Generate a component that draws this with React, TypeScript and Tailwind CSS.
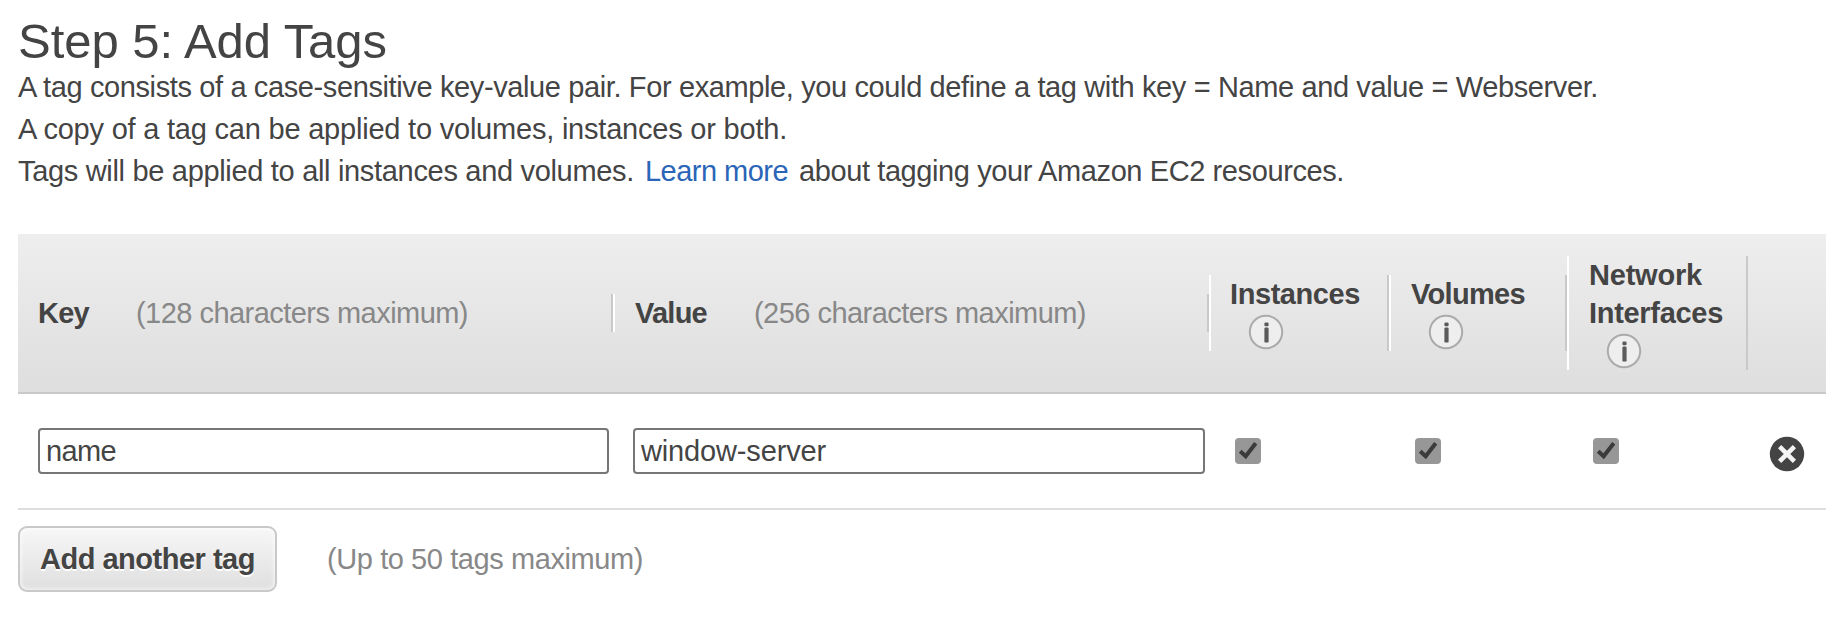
import React from "react";

const INFO_COLOR = "#aaaaaa";

function Fit({ w, children, className = "" }: { w: number; children: string; className?: string }) {
  const ref = React.useRef<HTMLSpanElement>(null);
  const [sp, setSp] = React.useState(0);
  React.useLayoutEffect(() => {
    const el = ref.current;
    if (el) setSp((w - el.getBoundingClientRect().width) / children.length);
  }, []);
  return (
    <span ref={ref} className={`inline-block whitespace-pre ${className}`} style={{ letterSpacing: `${sp}px` }}>
      {children}
    </span>
  );
}

function Info() {
  return (
    <svg width="36" height="36" viewBox="0 0 36 36" className="block">
      <circle cx="18" cy="18" r="16.2" fill="#eeeeee" stroke={INFO_COLOR} strokeWidth="2" />
      <rect x="16.4" y="8.6" width="4.2" height="3.6" rx="1.2" fill="#5a5a5a" />
      <rect x="16.4" y="13.6" width="4.2" height="15" rx="1.2" fill="#5a5a5a" />
    </svg>
  );
}

function Check() {
  return (
    <svg width="26" height="26" viewBox="0 0 26 26" className="block">
      <rect width="26" height="26" rx="4" fill="#979797" />
      <path d="M5.2 13.2L10.7 18.3L20.7 5.2" fill="none" stroke="#3b3b3b" strokeWidth="4" />
    </svg>
  );
}

export default function App() {
  return (
    <main className="h-[636px] w-[1840px] overflow-hidden bg-white pl-[18px] font-['Liberation_Sans',Arial,sans-serif] text-[29px] text-[#444444]">
      <h1 className="h-[66px] pt-[13px] text-[49px] leading-[56px]">
        <Fit w={369}>Step 5: Add Tags</Fit>
      </h1>
      <div className="leading-[42px]">
        <p className="h-[42px]"><Fit w={1580}>A tag consists of a case-sensitive key-value pair. For example, you could define a tag with key = Name and value = Webserver.</Fit></p>
        <p className="h-[42px]"><Fit w={769}>A copy of a tag can be applied to volumes, instances or both.</Fit></p>
        <p className="flex h-[42px]">
          <Fit w={616}>Tags will be applied to all instances and volumes.</Fit>
          <a className="ml-[11px] text-[#2a65b8]"><Fit w={143}>Learn more</Fit></a>
          <span className="ml-[11px]"><Fit w={545}>about tagging your Amazon EC2 resources.</Fit></span>
        </p>
      </div>

      <section className="mt-[42px] w-[1808px]">
        <div className="flex h-[160px] items-center border-b-2 border-[#c9c9c9] bg-linear-to-b from-[#eeeeee] to-[#dedede] leading-[38px]">
          <div className="flex h-[38px] w-[595px] border-r-2 border-[#c9c9c9] pl-5">
            <b><Fit w={51}>Key</Fit></b>
            <span className="ml-[47px] text-[#888888]"><Fit w={332}>(128 characters maximum)</Fit></span>
          </div>
          <div className="flex h-[38px] w-[596px] border-r-2 border-l-2 border-r-[#c9c9c9] border-l-white pl-5">
            <b><Fit w={72}>Value</Fit></b>
            <span className="ml-[47px] text-[#888888]"><Fit w={332}>(256 characters maximum)</Fit></span>
          </div>
          <div className="h-[76px] w-[180px] border-r-2 border-l-2 border-r-[#c9c9c9] border-l-white pl-[19px]">
            <b className="block h-[38px]"><Fit w={130}>Instances</Fit></b>
            <div className="pt-px pl-[18px]"><Info /></div>
          </div>
          <div className="h-[76px] w-[178px] border-r-2 border-l-2 border-r-[#c9c9c9] border-l-white pl-5">
            <b className="block h-[38px]"><Fit w={114}>Volumes</Fit></b>
            <div className="pt-px pl-[17px]"><Info /></div>
          </div>
          <div className="h-[114px] w-[181px] border-r-2 border-l-2 border-r-[#c9c9c9] border-l-white pl-5">
            <b className="block h-[38px]"><Fit w={113}>Network</Fit></b>
            <b className="block h-[38px]"><Fit w={134}>Interfaces</Fit></b>
            <div className="pt-px pl-[17px]"><Info /></div>
          </div>
        </div>

        <div className="flex h-[116px] items-start border-b-2 border-[#dddddd] pt-[34px] pl-5">
          <div className="h-[46px] w-[571px] rounded-[4px] border-2 border-[#767676] pl-1.5 leading-[43px]"><Fit w={70}>name</Fit></div>
          <div className="ml-[24px] h-[46px] w-[572px] rounded-[4px] border-2 border-[#767676] pl-1.5 leading-[43px]"><Fit w={185}>window-server</Fit></div>
          <div className="mt-[10px] ml-[30px]"><Check /></div>
          <div className="mt-[10px] ml-[154px]"><Check /></div>
          <div className="mt-[10px] ml-[152px]"><Check /></div>
          <svg width="36" height="36" viewBox="0 0 36 36" className="mt-[8px] ml-[150px] block">
            <circle cx="18" cy="18" r="17.2" fill="#444444" />
            <path d="M10.6 10.6L25.4 25.4M25.4 10.6L10.6 25.4" stroke="#f4f4f4" strokeWidth="4.6" />
          </svg>
        </div>

        <div className="mt-4 flex items-center">
          <button className="h-[66px] w-[259px] rounded-[9px] border-2 border-[#c9c9c9] bg-linear-to-b from-[#f7f7f7] to-[#dfdfdf] pl-5 text-left font-bold leading-[62px] shadow-[inset_0_0_4px_1px_rgba(255,255,255,0.7)] [text-shadow:0_2px_0_#ffffff]">
            <Fit w={215}>Add another tag</Fit>
          </button>
          <span className="ml-[50px] pt-0.5 text-[#888888]"><Fit w={316}>(Up to 50 tags maximum)</Fit></span>
        </div>
      </section>
    </main>
  );
}
